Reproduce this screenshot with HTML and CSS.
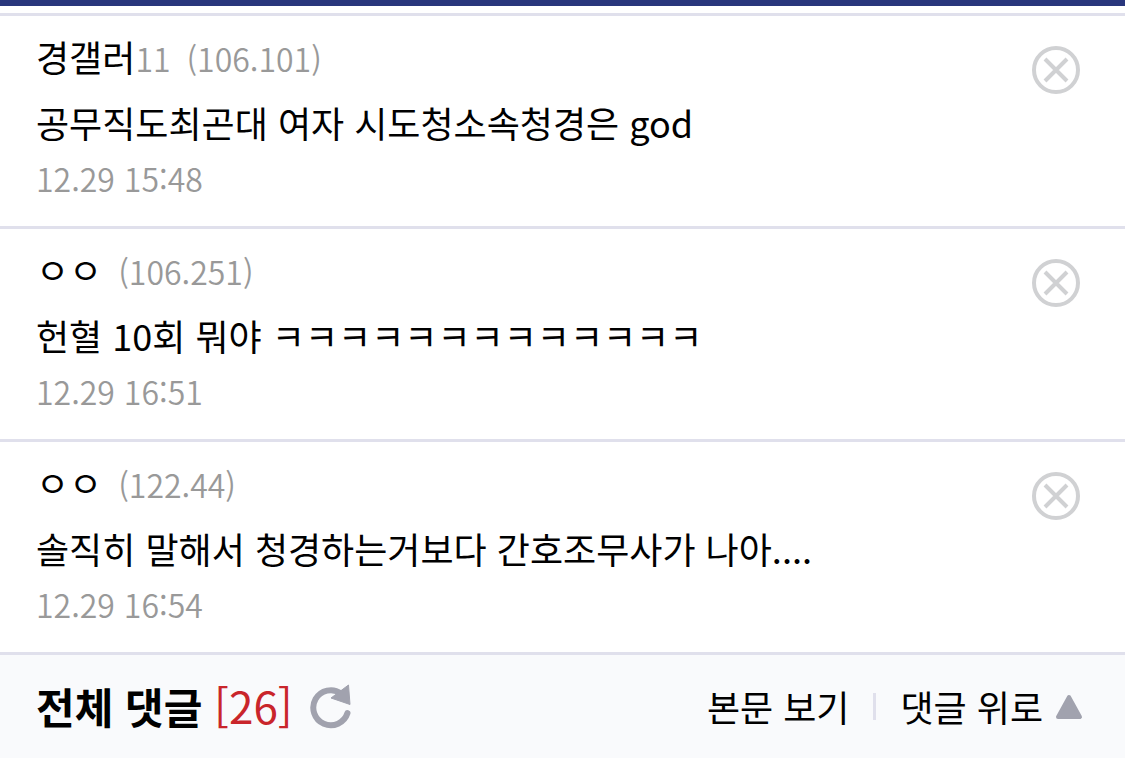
FILE: index.html
```html
<!DOCTYPE html>
<html lang="ko">
  <head>
    <meta charset="utf-8">
    <meta name="viewport" content="width=device-width, initial-scale=1">
    <title>댓글</title>
    <link rel="stylesheet" href="styles.css">
  </head>
  <body>
    <section class="comments">
      <ul class="comment-list">
        <li class="comment">
          <div class="comment-body">
            <div class="writer">경갤러<span class="num">11</span><span class="ip">(106.101)</span></div>
            <p class="text">공무직도최곤대 여자 시도청소속청경은 god</p>
            <time class="date">12.29 15:48</time>
          </div>
          <button class="delete" type="button" aria-label="삭제">
            <svg viewBox="0 0 50 50"><circle cx="25" cy="25" r="22"/><path d="M14 14l22 22M36 14L14 36"/></svg>
          </button>
        </li>
        <li class="comment">
          <div class="comment-body">
            <div class="writer">ㅇㅇ<span class="ip">(106.251)</span></div>
            <p class="text">헌혈 10회 뭐야 ㅋㅋㅋㅋㅋㅋㅋㅋㅋㅋㅋㅋㅋ</p>
            <time class="date">12.29 16:51</time>
          </div>
          <button class="delete" type="button" aria-label="삭제">
            <svg viewBox="0 0 50 50"><circle cx="25" cy="25" r="22"/><path d="M14 14l22 22M36 14L14 36"/></svg>
          </button>
        </li>
        <li class="comment">
          <div class="comment-body">
            <div class="writer">ㅇㅇ<span class="ip">(122.44)</span></div>
            <p class="text">솔직히 말해서 청경하는거보다 간호조무사가 나아....</p>
            <time class="date">12.29 16:54</time>
          </div>
          <button class="delete" type="button" aria-label="삭제">
            <svg viewBox="0 0 50 50"><circle cx="25" cy="25" r="22"/><path d="M14 14l22 22M36 14L14 36"/></svg>
          </button>
        </li>
      </ul>
      <div class="comment-bar">
        <h2 class="total">전체 댓글 <span class="count">[26]</span></h2>
        <button class="refresh" type="button" aria-label="새로고침">
          <svg viewBox="0 0 44 46"><path class="arc" d="M32 10.500A17.500 17.500 0 1 0 38.500 30"/><path class="head" d="M39.500 2L41 21.500L22 15z"/></svg>
        </button>
        <nav class="links">
          <a href="#">본문 보기</a>
          <a href="#" class="up">댓글 위로 <svg viewBox="0 0 28 26"><path d="M14 4L25 24H3z"/></svg></a>
        </nav>
      </div>
    </section>
  </body>
</html>
```
FILE: styles.css
```css
* {
  box-sizing: border-box;
}

body {
  margin: 0;
  background-color: #fff;
  color: #000;
  font-family: "Noto Sans CJK KR", sans-serif;
}

.comments {
  border-top: 6px solid #29367c;
  padding-top: 7px;
}

.comment-list {
  list-style: none;
  margin: 0;
  padding: 0;
}

.comment {
  display: flex;
  justify-content: space-between;
  align-items: flex-start;
  border-top: 3px solid #e0e0ec;
  padding: 11px 44px 29px 36px;
}

.writer {
  font-size: 36px;
  line-height: 58px;
}

.num,
.ip,
.date {
  color: #999;
  font-size: 32px;
  font-weight: 350;
}

.num,
.ip,
.count {
  line-height: 1;
}

.ip {
  margin-left: 16px;
}

.text {
  margin: 0;
  font-size: 36px;
  line-height: 74px;
}

.date {
  display: block;
  line-height: 38px;
}

.delete,
.refresh {
  flex-shrink: 0;
  border: 0;
  padding: 0;
  background: none;
  cursor: pointer;
}

.delete {
  width: 50px;
  height: 50px;
  margin-top: 18px;
}

svg {
  display: block;
}

.delete svg {
  fill: none;
  stroke: #d0d1d3;
  stroke-width: 4;
}

.comment-bar {
  display: flex;
  align-items: center;
  border-top: 3px solid #e0e0ec;
  background-color: #f9fafc;
  padding: 21px 42px 22px 36px;
}

.total {
  margin: 0;
  font-size: 42px;
  line-height: 60px;
}

.count {
  color: #c9252b;
  font-size: 44px;
  font-weight: normal;
}

.refresh {
  width: 44px;
  height: 46px;
  margin-left: 16px;
}

.arc {
  fill: none;
  stroke: #a1a2ae;
  stroke-width: 6;
  stroke-linecap: round;
}

.head {
  fill: #a1a2ae;
  stroke: #a1a2ae;
  stroke-linejoin: round;
}

.links {
  display: flex;
  align-items: center;
  margin-left: auto;
}

.links a {
  color: #000;
  font-size: 36px;
  line-height: 54px;
  text-decoration: none;
}

.links .up {
  display: flex;
  align-items: center;
  gap: 12px;
}

.up::before {
  content: "";
  width: 3px;
  height: 27px;
  margin: 0 12px 0 24px;
  background-color: #e0e0ec;
}

.up svg {
  width: 28px;
  height: 26px;
  fill: #a1a2ae;
  stroke: #a1a2ae;
  stroke-width: 4;
  stroke-linejoin: round;
}
```
